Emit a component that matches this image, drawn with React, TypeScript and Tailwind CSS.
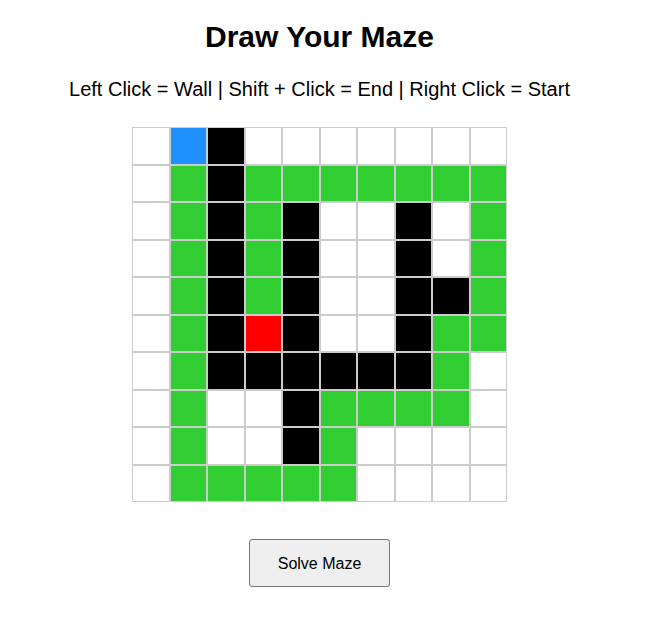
import React from "react";

// W = empty, K = wall, G = path, S = start, E = end
const maze = [
  "WSKWWWWWWW",
  "WGKGGGGGGG",
  "WGKGKWWKWG",
  "WGKGKWWKWG",
  "WGKGKWWKKG",
  "WGKEKWWKGG",
  "WGKKKKKKGW",
  "WGWWKGGGGW",
  "WGWWKGWWWW",
  "WGGGGGWWWW",
];

const cellColor: Record<string, string> = {
  W: "bg-white",
  K: "bg-black",
  G: "bg-[#32cd32]",
  S: "bg-[#1e90ff]",
  E: "bg-[#ff0000]",
};

const App: React.FC = () => {
  return (
    <div className="w-[639px] min-h-[637px] bg-white text-black font-['Liberation_Sans',Arial,sans-serif] flex flex-col items-center">
      {/* Title */}
      <h1 className="mt-[20px] text-[30px] leading-[34px] font-bold">Draw Your Maze</h1>
      <p className="mt-[23px] text-[20px] leading-[24px]">
        Left Click = Wall | Shift + Click = End | Right Click = Start
      </p>

      {/* Maze grid */}
      <div className="mt-[26px] w-[375px] h-[375px] grid grid-cols-10 grid-rows-10">
        {maze.map((row, r) =>
          row.split("").map((c, i) => (
            <div key={`${r}-${i}`} className={`border border-[#cccccc] ${cellColor[c]}`} />
          ))
        )}
      </div>

      <button className="mt-[37px] w-[141px] h-[48px] bg-[#efefef] border border-[#767676] rounded-[3px] text-[16px] leading-[46px] pt-px">
        Solve Maze
      </button>
    </div>
  );
};

export default App;
